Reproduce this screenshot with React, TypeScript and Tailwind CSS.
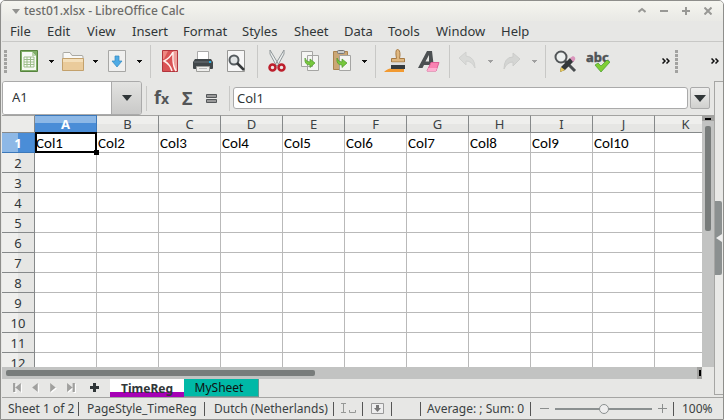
import React from "react";

const COLUMNS = ["A", "B", "C", "D", "E", "F", "G", "H", "I", "J", "K"];
const ROWS = [1, 2, 3, 4, 5, 6, 7, 8, 9, 10, 11, 12];
const MENUS = [
  { label: "File", width: "w-[37px]" },
  { label: "Edit", width: "w-[40px]" },
  { label: "View", width: "w-[45px]" },
  { label: "Insert", width: "w-[51px]" },
  { label: "Format", width: "w-[59px]" },
  { label: "Styles", width: "w-[52px]" },
  { label: "Sheet", width: "w-[50px]" },
  { label: "Data", width: "w-[44px]" },
  { label: "Tools", width: "w-[48px]" },
  { label: "Window", width: "w-[65px]" },
  { label: "Help", width: "w-[40px]" },
];

type IconProps = { children: React.ReactNode };

function Icon({ children }: IconProps) {
  return (
    <svg width="24" height="24" viewBox="0 0 24 24" fill="none" aria-hidden="true">
      {children}
    </svg>
  );
}

function Tool({ label, children }: { label: string; children: React.ReactNode }) {
  return (
    <button aria-label={label} className="flex h-6 w-6 shrink-0 items-center justify-center">
      <Icon>{children}</Icon>
    </button>
  );
}

function Drop({ label, muted = false }: { label: string; muted?: boolean }) {
  return (
    <button aria-label={label} className="flex h-6 w-5 shrink-0 items-center justify-center">
      <svg width="5" height="3" viewBox="0 0 5 3" shapeRendering="crispEdges">
        <path d="M0 0H5V1H4V2H3V3H2V2H1V1H0Z" fill={muted ? "#a0a0a0" : "#111"} />
      </svg>
    </button>
  );
}

function Separator() {
  return <div className="h-[33px] w-px shrink-0 bg-[#c8c8c6]" />;
}

function Grip() {
  return (
    <svg width="3" height="23" viewBox="0 0 3 23" className="shrink-0" shapeRendering="crispEdges">
      {[0, 4, 8, 12, 16, 20].map((y) => (
        <rect key={y} y={y} width="3" height="3" fill="#a2a2a0" />
      ))}
    </svg>
  );
}

function Chevrons() {
  return (
    <button aria-label="More controls" className="flex h-6 w-2 shrink-0 items-center">
      <svg width="8" height="6" viewBox="0 0 8 6" fill="none" stroke="#111" strokeWidth="1.5">
        <path d="M.5 .5L3 3L.5 5.5M4.5 .5L7 3L4.5 5.5" />
      </svg>
    </button>
  );
}

function TitleBar() {
  return (
    <header className="flex h-5 shrink-0 items-center bg-gradient-to-b from-[#f5f5ef] to-[#e9e9e5] pr-[11px] pl-[10px] text-[#6c6c69]">
      <svg width="8" height="5" viewBox="0 0 8 5" className="mr-1">
        <path d="M0 0H8L4 5Z" fill="#92928f" />
      </svg>
      <h1 className="flex-1 text-[12px] leading-4 font-medium">test01.xlsx - LibreOffice Calc</h1>
      <div className="flex gap-[14px]">
        <button aria-label="Shade">
          <svg width="8" height="8" viewBox="0 0 8 8" fill="none" stroke="#989895" strokeWidth="2"><path d="M.5 5L4 2L7.500 5" /></svg>
        </button>
        <button aria-label="Minimize">
          <svg width="8" height="8" viewBox="0 0 8 8" fill="none" stroke="#989895" strokeWidth="2"><path d="M0 4H8" /></svg>
        </button>
        <button aria-label="Maximize">
          <svg width="8" height="8" viewBox="0 0 8 8" fill="none" stroke="#989895" strokeWidth="2"><path d="M0 4H8M4 0V8" /></svg>
        </button>
        <button aria-label="Close">
          <svg width="8" height="8" viewBox="0 0 8 8" fill="none" stroke="#989895" strokeWidth="2"><path d="M.5 .5L7.500 7.500M7.500 .5L.5 7.500" /></svg>
        </button>
      </div>
    </header>
  );
}

function Toolbar() {
  return (
    <div className="flex h-[38px] shrink-0 items-center pr-1 pl-[2px]">
      <Grip />
      <div className="w-[10px] shrink-0" />
      <Tool label="New">
        <path d="M3.500 1.500H20.500V22.500H3.500Z" fill="#7fae67" stroke="#56833d" />
        <path d="M5 3H15L19 7V21H5Z" fill="#f7faf5" />
        <path d="M15 3V7H19Z" fill="#b9d3ab" />
        <path d="M7 8H17V18H7ZM7 10.500H17M7 13H17M7 15.500H17M10 8V18M13.500 8V18" stroke="#9dbd8b" />
      </Tool>
      <Drop label="New options" />
      <Tool label="Open">
        <path d="M2 4.500Q2 3.500 3 3.500H9L11 6.500H21Q22 6.500 22 8V12H2Z" fill="#f8f8f6" stroke="#aaa9a3" />
        <path d="M1.500 9.500H22.500V21.500H1.500Z" fill="#eacb9b" stroke="#c3a16c" />
        <path d="M2 10H22V13H2Z" fill="#f4dfba" />
      </Tool>
      <Drop label="Open options" />
      <Tool label="Save">
        <path d="M3.500 1.500H20.500V22.500H3.500Z" fill="#f0f0ef" stroke="#a7a7a5" />
        <path d="M10 7H14V12H17L12 18L7 12H10Z" fill="#4fabe5" stroke="#3289c2" strokeWidth=".7" />
      </Tool>
      <Drop label="Save options" />
      <div className="w-px shrink-0" />
      <Separator />
      <div className="w-2 shrink-0" />
      <Tool label="Export as PDF">
        <path d="M3.500 1.500H18.500V22.500H3.500Z" fill="#d95355" stroke="#b2353d" />
        <path d="M14 2H18V22H16Q15 17 15 12Z" fill="#efa09b" />
        <path d="M4 2H9L5 10H4Z" fill="#ee8781" />
        <path d="M14 3Q11 9 5 12Q11 15 13 22M14 3V10Q14 17 17 22" stroke="#fff0ed" strokeWidth="1.500" />
      </Tool>
      <div className="w-2 shrink-0" />
      <Tool label="Print">
        <path d="M6.500 2.500H17.500V12H6.500Z" fill="#fff" stroke="#aaa" />
        <path d="M4 10H20L22 13V19Q22 20 21 20H3Q2 20 2 19V13Z" fill="#41474a" />
        <path d="M3 13H21" stroke="#71777a" />
        <path d="M5.500 17.500H18.500V22.500H5.500Z" fill="#efefed" stroke="#9e9e9b" />
        <path d="M8 19.500H16" stroke="#bbb" /><path d="M18 12H20V14H18Z" fill="#2baee0" />
      </Tool>
      <div className="w-[9px] shrink-0" />
      <Tool label="Print preview">
        <path d="M3.500 1.500H20.500V22.500H3.500Z" fill="#f6f6f6" stroke="#979795" />
        <circle cx="10" cy="11" r="4.500" fill="#e1e4e5" stroke="#565c60" strokeWidth="2" />
        <path d="M13 14L20 21" stroke="#36393b" strokeWidth="2.500" />
      </Tool>
      <div className="w-[9px] shrink-0" />
      <Separator />
      <div className="w-[7px] shrink-0" />
      <Tool label="Cut">
        <path d="M5 1L14 16L11.500 17L5 5ZM19 1L10 16L12.500 17L19 5Z" fill="#eceeee" stroke="#92999b" />
        <rect x="4.500" y="15.500" width="6" height="6" rx="3" fill="#ece5e4" stroke="#bd1f2c" strokeWidth="2.500" />
        <rect x="13.500" y="15.500" width="6" height="6" rx="3" fill="#ece5e4" stroke="#bd1f2c" strokeWidth="2.500" />
      </Tool>
      <div className="w-[9px] shrink-0" />
      <Tool label="Copy">
        <path d="M3.500 2.500H14.500V17.500H3.500ZM9.500 6.500H20.500V21.500H9.500Z" fill="#f5f5f3" stroke="#a5a5a3" />
        <path d="M7 9Q8 13 12 13V10L17 14L12 18.500V16Q6 16 7 9Z" fill="#78c83d" stroke="#4f992c" strokeWidth=".7" />
      </Tool>
      <div className="w-2 shrink-0" />
      <Tool label="Paste">
        <path d="M3.500 2.500H17.500V20.500H3.500Z" fill="#cba776" stroke="#aa8350" />
        <rect x="7.500" y="1.500" width="7" height="3" rx="1" fill="#c9cbc9" stroke="#777" />
        <path d="M9.500 6.500H20.500V21.500H9.500Z" fill="#f5f5f3" stroke="#a5a5a3" />
        <path d="M7 9Q8 13 12 13V10L17 14L12 18.500V16Q6 16 7 9Z" fill="#78c83d" stroke="#4f992c" strokeWidth=".7" />
      </Tool>
      <Drop label="Paste options" />
      <div className="w-px shrink-0" />
      <Separator />
      <div className="w-2 shrink-0" />
      <Tool label="Clone formatting">
        <path d="M0 23Q5 18 9 20L20 18V23Z" fill="#f29a31" />
        <path d="M13.500 .5Q11.500 .5 12 6L12.500 9.500H7.500V13H20.500V9.500H15.500L16 6Q16 .5 13.500 .5Z" fill="#dfb77f" stroke="#a77a43" />
        <path d="M7 13.500H21V16H7Z" fill="#ddd" /><path d="M7 16H21V20H7Z" fill="#353b3e" />
      </Tool>
      <div className="w-[9px] shrink-0" />
      <Tool label="Clear formatting">
        <path d="M1 19L10 2H15L17 19H12.500V16H7L5.500 19ZM8.500 12.500H12V6Z" fill="#4c5052" fillRule="evenodd" />
        <path d="M14 13.500H22L19 22H10Z" fill="#fa82b2" stroke="#dd5e95" strokeLinejoin="round" />
        <path d="M10 22L11.500 19H20L19 22Z" fill="#ffadd0" />
      </Tool>
      <div className="w-2 shrink-0" />
      <Separator />
      <div className="w-[6px] shrink-0" />
      <Tool label="Undo">
        <path d="M3 9L10 3V7Q19 8 19 19Q16 12 10 12V16Z" fill="#d9dad8" stroke="#d0d1cf" />
      </Tool>
      <Drop label="Undo history" muted />
      <Tool label="Redo">
        <path d="M20 10L13 4V8Q4 8 4 20Q7 13 13 13V17Z" fill="#d4d5d3" stroke="#cbccca" />
      </Tool>
      <Drop label="Redo history" muted />
      <div className="w-px shrink-0" />
      <Separator />
      <div className="w-[7px] shrink-0" />
      <Tool label="Find and replace">
        <circle cx="8" cy="8" r="5.500" fill="#edf0ef" stroke="#525658" strokeWidth="2" />
        <path d="M12 12L22 22" stroke="#494d4f" strokeWidth="3" />
        <path d="M8 18L17 9L21 12L12 21L7 23Z" fill="#34383a" />
        <path d="M17 9L20 7Q23 8 22 11L20 13Z" fill="#db95bc" />
        <path d="M8 18L12 21L7 23Z" fill="#e8c85a" />
      </Tool>
      <div className="w-[9px] shrink-0" />
      <Tool label="Spelling">
        <text x="0" y="13" fill="#505356" stroke="#505356" strokeWidth=".5" fontFamily="Noto Sans" fontSize="13" fontWeight="700">abc</text>
        <path d="M9 16L12 14L15 17L21 11L24 13L15 23Z" fill="#80cf35" stroke="#459b2c" strokeWidth=".7" />
      </Tool>
      <div className="min-w-0 flex-1" />
      <Chevrons />
      <div className="w-[5px] shrink-0" />
      <Grip />
      <div className="w-[33px] shrink-0" />
      <Chevrons />
    </div>
  );
}

function FormulaBar() {
  return (
    <div className="flex h-[35px] shrink-0 items-center pt-px pr-[13px]">
      <div className="flex h-[34px] w-[140px] shrink-0 overflow-hidden rounded-[3px] border border-[#aaa]">
        <input aria-label="Name box" defaultValue="A1" className="w-[108px] bg-white px-[9px] text-[13px] outline-none" />
        <button aria-label="Choose named range" className="flex flex-1 items-center justify-center border-l border-[#aaa] bg-gradient-to-b from-[#e3e3e1] to-[#c9c9c8]">
          <svg width="10" height="6" viewBox="0 0 10 6"><path d="M0 0H10L5 6Z" fill="#303638" /></svg>
        </button>
      </div>
      <div className="ml-1 h-[25px] w-px bg-[#c8c8c6]" />
      <button aria-label="Function wizard" className="ml-[7px] h-6 w-5 text-left text-[18px] leading-5 font-bold text-[#535557]">
        f<span className="text-[14px]">x</span>
      </button>
      <button aria-label="Sum" className="ml-2 h-6 w-4 text-left text-[18px] leading-6 font-bold text-[#535557]">Σ</button>
      <button aria-label="Formula" className="ml-2 flex h-6 w-[12px] items-center">
        <svg width="11" height="9" viewBox="0 0 11 9"><path d="M.5 .5H10.500V3.500H.5ZM.5 5.500H10.500V8.500H.5Z" fill="#999" stroke="#55585a" /></svg>
      </button>
      <div className="ml-[11px] h-[25px] w-px bg-[#c8c8c6]" />
      <input aria-label="Formula input" defaultValue="Col1" className="ml-[3px] h-[22px] min-w-0 flex-1 rounded-[3px] border border-[#aaa] bg-white px-[3px] text-[13px] outline-none" />
      <button aria-label="Expand formula bar" className="ml-[2px] flex h-[22px] w-5 items-center justify-center rounded-[2px] border border-[#aaa] bg-gradient-to-b from-[#efefee] to-[#d0d0ce]">
        <svg width="12" height="7" viewBox="0 0 12 7"><path d="M0 0H12L6 7Z" fill="#303638" /></svg>
      </button>
    </div>
  );
}

function Grid() {
  return (
    <div className="min-h-0 flex-1 overflow-hidden bg-white">
      <table className="w-[715px] table-fixed border-separate border-spacing-0 text-[13px] leading-4">
        <thead>
          <tr className="h-[18px]">
            <th aria-label="Select all" className="w-[33px] border-t border-r border-b border-t-[#a3a3a1] border-r-[#86898a] border-b-[#86898a] bg-[#ebebe9] p-0" />
            {COLUMNS.map((c) => (
              <th key={c} scope="col" className={c === "A"
                ? "w-[62px] border-t border-r border-b border-[#3c78b9] bg-linear-[180deg,#8db8e6_45%,#4a8dd7_45%] p-0 font-bold text-white"
                : "w-[62px] border-t border-r border-b border-t-[#a3a3a1] border-r-[#86898a] border-b-[#86898a] bg-linear-[180deg,#efefed_50%,#e6e6e4_50%] p-0 font-normal text-[#3b4144]"}>{c}</th>
            ))}
          </tr>
        </thead>
        <tbody>
          {ROWS.map((r) => (
            <tr key={r} className="h-5">
              <th scope="row" className={r === 1
                ? "border-r border-b border-[#3c78b9] bg-linear-[90deg,#8db8e6_50%,#4a8dd7_50%] p-0 font-bold text-white"
                : "border-r border-b border-[#86898a] bg-linear-[90deg,#efefed_50%,#e6e6e4_50%] p-0 font-normal text-[#303638]"}>{r}</th>
              {COLUMNS.map((c, i) => (
                <td key={c} className="relative border-r border-b border-[#b9b9b9] p-0 pl-px font-[Carlito,'Noto_Sans',sans-serif] text-[15px] text-black">
                  {r === 1 && i < 10 ? `Col${i + 1}` : ""}
                  {r === 1 && i === 0 && (
                    <span className="absolute -inset-px left-0 z-10 border-2 border-black">
                      <span className="absolute -right-1 -bottom-1 h-[5px] w-[5px] bg-black" />
                    </span>
                  )}
                </td>
              ))}
            </tr>
          ))}
        </tbody>
      </table>
    </div>
  );
}

function Workspace() {
  return (
    <main className="flex min-h-0 flex-1">
      <div className="flex min-w-0 flex-1 flex-col">
        <div className="flex min-h-0 flex-1">
          <Grid />
          <div className="w-[12px] shrink-0 border-t border-[#a3a3a1] bg-[#c2c3c2]">
            <div className="flex h-[5px] items-center justify-center bg-[#a2a2a0]"><div className="h-[2px] w-[6px] bg-black" /></div>
            <div className="mx-auto mt-[5px] h-[105px] w-[6px] rounded-[2px] bg-[#787c7b]" />
          </div>
        </div>
        <div className="flex h-[12px] shrink-0 items-center bg-[#c2c3c2] pl-1">
          <div className="h-[6px] w-[309px] rounded-[2px] bg-[#787c7b]" />
          <div className="flex-1" />
          <div className="flex h-full w-[5px] items-center justify-center bg-[#a2a2a0]"><div className="h-[6px] w-[2px] bg-black" /></div>
          <div className="h-full w-[12px] bg-[#e7e7e5]" />
        </div>
        <SheetTabs />
      </div>
      <aside className="-mt-[34px] mb-[2px] flex w-[9px] shrink-0 flex-col justify-center border-t border-b border-l border-[#a6a6a4] bg-[#e9e9e7]">
        <button aria-label="Show sidebar" className="flex h-[74px] w-[7px] items-center justify-center rounded-r-[2px] bg-[#8b9090]">
          <svg width="6" height="8" viewBox="0 0 6 8"><path d="M6 0V8L0 4Z" fill="#eee" /></svg>
        </button>
      </aside>
    </main>
  );
}

function NavArrow({ label, path }: { label: string; path: string }) {
  return (
    <button aria-label={label} className="w-[18px]">
      <svg width="9" height="10" viewBox="0 0 8 9" className="mx-auto">
        <path d={path} transform="translate(1 1)" fill="#fff" /><path d={path} fill="#a0a09e" />
      </svg>
    </button>
  );
}

function SheetTabs() {
  return (
    <div className="flex h-[18px] shrink-0 text-[12px]">
      <nav aria-label="Sheet navigation" className="flex w-[108px] items-center pb-px pl-[6px]">
        <NavArrow label="First sheet" path="M0 0H2V4L7 0V8L2 4V8H0Z" />
        <NavArrow label="Previous sheet" path="M6 0V8L1 4Z" />
        <NavArrow label="Next sheet" path="M1 0V8L6 4Z" />
        <NavArrow label="Last sheet" path="M0 0V8L5 4V8H7V0H5V4Z" />
        <button aria-label="Add sheet" className="ml-[10px]">
          <svg width="9" height="9" viewBox="0 0 9 9"><path d="M3 0H6V3H9V6H6V9H3V6H0V3H3Z" fill="#303638" /></svg>
        </button>
      </nav>
      <button className="w-[74px] border-b-[5px] border-[#a600b5] bg-white pt-[3px] leading-[14px] font-bold text-[#303638]">TimeReg</button>
      <button className="w-[75px] border-r border-b border-[#619b94] bg-[#00b9a7] pr-1 leading-4 text-[#111]">MySheet</button>
    </div>
  );
}

function StatusBar() {
  const cell = "flex h-[14px] shrink-0 items-center border-r border-[#555]";
  return (
    <footer className="flex h-[22px] shrink-0 items-center border-t border-[#a5a5a3] text-[12px] text-[#3a3f42]">
      <div className={`${cell} w-[77px] pl-[6px]`}>Sheet 1 of 2</div>
      <div className={`${cell} w-[126px] pl-2`}>PageStyle_TimeReg</div>
      <div className={`${cell} w-[129px] pl-[9px]`}>Dutch (Netherlands)</div>
      <div className={`${cell} w-[29px] justify-center`}>
        <svg width="15" height="11" viewBox="0 0 15 11" fill="none" stroke="#969896"><path d="M0 .5H5M2.500 .5V9.500M0 9.500H5M8.500 7V9.500H14.500V7" /></svg>
      </div>
      <div className={`${cell} w-[29px] justify-center`}>
        <svg width="13" height="11" viewBox="0 0 13 11"><path d="M.5 .5H12.500V10.500H.5Z" fill="#eee" stroke="#999" /><path d="M5 2H8V5H10L6.500 9L3 5H5Z" fill="#777" /></svg>
      </div>
      <div className={`${cell} w-[29px]`} />
      <div className="flex h-[14px] min-w-0 flex-1 items-center justify-center border-r border-[#555] whitespace-nowrap">Average: ; Sum: 0</div>
      <div className={`${cell} w-[143px] pl-[9px]`}>
        <button aria-label="Zoom out" className="h-px w-[9px] bg-[#8b8e8d]" />
        <input aria-label="Zoom" type="range" defaultValue="50" className="mx-[6px] h-[10px] w-[97px] appearance-none bg-transparent bg-linear-[180deg,transparent_40%,#8b9090_40%,#8b9090_60%,transparent_60%] [&::-webkit-slider-thumb]:h-[10px] [&::-webkit-slider-thumb]:w-[10px] [&::-webkit-slider-thumb]:appearance-none [&::-webkit-slider-thumb]:rounded-full [&::-webkit-slider-thumb]:border [&::-webkit-slider-thumb]:border-[#8b9090] [&::-webkit-slider-thumb]:bg-[#eee]" />
        <button aria-label="Zoom in">
          <svg width="9" height="9" viewBox="0 0 9 9"><path d="M0 4H9V5H0ZM4 0H5V9H4Z" fill="#8b8e8d" /></svg>
        </button>
      </div>
      <div className="w-[49px] shrink-0 pl-2">100%</div>
    </footer>
  );
}

export default function App() {
  return (
    <div className="flex h-screen flex-col overflow-hidden rounded-t-[5px] border border-[#8e8e8b] bg-[#e7e7e5] pl-px font-['Noto_Sans',sans-serif] text-[#303638]">
      <TitleBar />
      <nav className="flex h-[21px] shrink-0 items-center border-b border-[#c8c8c6] pb-px pl-2 text-[13px]">
        {MENUS.map((m) => (
          <button key={m.label} className={`${m.width} shrink-0 text-left leading-5`}>{m.label}</button>
        ))}
      </nav>
      <Toolbar />
      <FormulaBar />
      <Workspace />
      <StatusBar />
    </div>
  );
}
